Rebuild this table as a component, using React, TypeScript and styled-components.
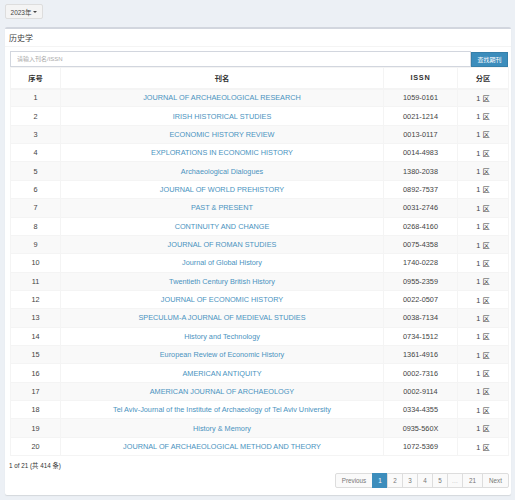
import React from "react";
import styled, { createGlobalStyle } from "styled-components";

const Global = createGlobalStyle`
  html, body { margin: 0; padding: 0; background: #ecf0f5; }
  body { font-family: "Liberation Sans", "Noto Sans CJK SC", sans-serif; color: #333; }
  * { box-sizing: border-box; }
`;

const Page = styled.div`
  width: 515px;
  height: 500px;
  padding: 4px 4px 0 5px;
  display: flex;
  flex-direction: column;
`;

const YearButton = styled.button`
  align-self: flex-start;
  width: 38px;
  height: 15px;
  padding: 0;
  background: #f4f4f4;
  border: 1px solid #ddd;
  border-radius: 2px;
  font-family: inherit;
  font-size: 6.5px;
  color: #444;
  display: flex;
  align-items: center;
  justify-content: center;
  gap: 2px;
`;

const Caret = styled.span`
  width: 0;
  height: 0;
  border-left: 2px solid transparent;
  border-right: 2px solid transparent;
  border-top: 2px solid #444;
`;

const Box = styled.div`
  margin-top: 8px;
  width: 506px;
  height: 468px;
  background: #fff;
  border-top: 2px solid #d2d6de;
  border-radius: 2px;
  box-shadow: 0 1px 1px rgba(0, 0, 0, 0.1);
  display: flex;
  flex-direction: column;
`;

const BoxHeader = styled.div`
  height: 18px;
  padding: 0 4px;
  border-bottom: 1px solid #f4f4f4;
  display: flex;
  align-items: center;
  font-size: 8px;
  color: #444;
`;

const BoxBody = styled.div`
  padding: 4px 3px 0 5px;
  display: flex;
  flex-direction: column;
`;

const SearchRow = styled.div`
  display: flex;
  height: 16px;
`;

const SearchInput = styled.input`
  flex: 1;
  height: 16px;
  border: 1px solid #d2d6de;
  padding: 0 6px;
  font-family: inherit;
  font-size: 6px;
  color: #555;
  outline: none;
  &::placeholder { color: #aaa; }
`;

const SearchButton = styled.button`
  width: 37px;
  height: 15px;
  margin-top: 0.5px;
  border: 1px solid #367fa9;
  background: #3c8dbc;
  color: #fff;
  font-family: inherit;
  font-size: 6px;
  padding: 0;
`;

const Table = styled.table`
  width: 498px;
  border-collapse: collapse;
  table-layout: fixed;
  font-size: 7.3px;
`;

const HeadCell = styled.th<{ $w: number; $spaced?: boolean }>`
  width: ${(p) => p.$w}px;
  height: 21px;
  border: 1px solid #f4f4f4;
  border-bottom: 2px solid #f4f4f4;
  font-weight: bold;
  color: #333;
  text-align: center;
  padding: 0;
  letter-spacing: ${(p) => (p.$spaced ? "0.8px" : "0")};
`;

const Row = styled.tr<{ $odd: boolean }>`
  height: 18.37px;
  background: ${(p) => (p.$odd ? "#f9f9f9" : "#fff")};
`;

const Cell = styled.td<{ $link?: boolean }>`
  border: 1px solid #f4f4f4;
  text-align: center;
  padding: 0;
  color: ${(p) => (p.$link ? "#4a93c0" : "#444")};
  white-space: nowrap;
  overflow: hidden;
`;

const Footer = styled.div`
  padding: 5px 4px 0 4px;
  display: flex;
  flex-direction: column;
`;

const Info = styled.div`
  font-size: 6.3px;
  color: #333;
  height: 9px;
`;

const Pager = styled.div`
  align-self: flex-end;
  margin-top: 3px;
  margin-right: -2px;
  display: flex;
  height: 15px;
`;

const PageItem = styled.span<{ $w: number; $active?: boolean; $muted?: boolean }>`
  width: ${(p) => p.$w}px;
  height: 15px;
  display: flex;
  align-items: center;
  justify-content: center;
  font-size: 6.3px;
  border: 1px solid ${(p) => (p.$active ? "#3c8dbc" : "#ddd")};
  margin-left: -1px;
  background: ${(p) => (p.$active ? "#3c8dbc" : "#fafafa")};
  color: ${(p) => (p.$active ? "#fff" : p.$muted ? "#bbb" : "#777")};
  &:first-child { border-radius: 2px 0 0 2px; margin-left: 0; }
  &:last-child { border-radius: 0 2px 2px 0; }
`;

const rows: [string, string][] = [
  ["JOURNAL OF ARCHAEOLOGICAL RESEARCH", "1059-0161"],
  ["IRISH HISTORICAL STUDIES", "0021-1214"],
  ["ECONOMIC HISTORY REVIEW", "0013-0117"],
  ["EXPLORATIONS IN ECONOMIC HISTORY", "0014-4983"],
  ["Archaeological Dialogues", "1380-2038"],
  ["JOURNAL OF WORLD PREHISTORY", "0892-7537"],
  ["PAST & PRESENT", "0031-2746"],
  ["CONTINUITY AND CHANGE", "0268-4160"],
  ["JOURNAL OF ROMAN STUDIES", "0075-4358"],
  ["Journal of Global History", "1740-0228"],
  ["Twentieth Century British History", "0955-2359"],
  ["JOURNAL OF ECONOMIC HISTORY", "0022-0507"],
  ["SPECULUM-A JOURNAL OF MEDIEVAL STUDIES", "0038-7134"],
  ["History and Technology", "0734-1512"],
  ["European Review of Economic History", "1361-4916"],
  ["AMERICAN ANTIQUITY", "0002-7316"],
  ["AMERICAN JOURNAL OF ARCHAEOLOGY", "0002-9114"],
  ["Tel Aviv-Journal of the Institute of Archaeology of Tel Aviv University", "0334-4355"],
  ["History & Memory", "0935-560X"],
  ["JOURNAL OF ARCHAEOLOGICAL METHOD AND THEORY", "1072-5369"],
];

const pages: { label: string; w: number; active?: boolean; muted?: boolean }[] = [
  { label: "Previous", w: 38 },
  { label: "1", w: 16, active: true },
  { label: "2", w: 16 },
  { label: "3", w: 16 },
  { label: "4", w: 16 },
  { label: "5", w: 16 },
  { label: "…", w: 16, muted: true },
  { label: "21", w: 21 },
  { label: "Next", w: 27 },
];

export default function App() {
  return (
    <>
      <Global />
      <Page>
        <YearButton>
          2023年 <Caret />
        </YearButton>
        <Box>
          <BoxHeader>历史学</BoxHeader>
          <BoxBody>
            <SearchRow>
              <SearchInput placeholder="请输入刊名/ISSN" />
              <SearchButton>查找期刊</SearchButton>
            </SearchRow>
            <Table>
              <thead>
                <tr>
                  <HeadCell $w={50}>序号</HeadCell>
                  <HeadCell $w={323}>刊名</HeadCell>
                  <HeadCell $w={74} $spaced>ISSN</HeadCell>
                  <HeadCell $w={51}>分区</HeadCell>
                </tr>
              </thead>
              <tbody>
                {rows.map(([name, issn], i) => (
                  <Row key={i} $odd={i % 2 === 0}>
                    <Cell>{i + 1}</Cell>
                    <Cell $link>{name}</Cell>
                    <Cell>{issn}</Cell>
                    <Cell>1 区</Cell>
                  </Row>
                ))}
              </tbody>
            </Table>
          </BoxBody>
          <Footer>
            <Info>1 of 21 (共 414 条)</Info>
            <Pager>
              {pages.map((p) => (
                <PageItem key={p.label} $w={p.w} $active={p.active} $muted={p.muted}>
                  {p.label}
                </PageItem>
              ))}
            </Pager>
          </Footer>
        </Box>
      </Page>
    </>
  );
}
